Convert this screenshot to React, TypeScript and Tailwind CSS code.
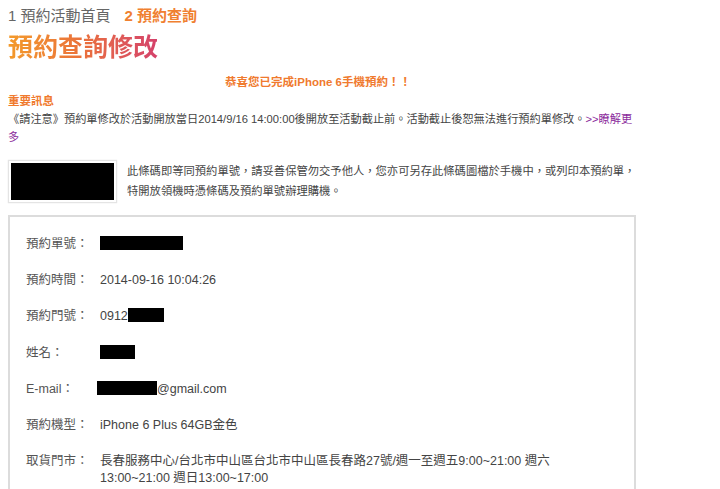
import React from 'react';

const latin = "font-['Liberation_Sans','Noto_Sans_CJK_TC',sans-serif]";

interface Row {
  label: string;
  value: React.ReactNode;
}

const Redact: React.FC<{ w: string }> = ({ w }) => (
  <span className={`inline-block h-[14px] bg-black align-[-2px] ${w}`} />
);

const rows: Row[] = [
  { label: '預約單號：', value: <Redact w="w-[83px]" /> },
  { label: '預約時間：', value: '2014-09-16 10:04:26' },
  {
    label: '預約門號：',
    value: (
      <>
        0912
        <Redact w="w-[36px]" />
      </>
    ),
  },
  { label: '姓名：', value: <Redact w="w-[35px]" /> },
  {
    label: 'E-mail：',
    value: (
      <>
        <span className="-ml-[3px] inline-block h-[14px] w-[60px] bg-black align-[-2px]" />
        @gmail.com
      </>
    ),
  },
  { label: '預約機型：', value: 'iPhone 6 Plus 64GB金色' },
  {
    label: '取貨門市：',
    value: (
      <>
        長春服務中心/台北市中山區台北市中山區長春路27號/週一至週五9:00~21:00 週六
        <br />
        13:00~21:00 週日13:00~17:00
      </>
    ),
  },
];

export default function App() {
  return (
    <div className={`min-h-screen w-[720px] overflow-hidden bg-white ${latin}`}>
      <div className="w-[628px] pl-[8px]">
        {/* breadcrumb */}
        <div className="flex h-[32px] items-center gap-[14px] pt-[1px] text-[15px]">
          <span className="text-[#666]">1 預約活動首頁</span>
          <span className="font-bold text-[#f08030]">2 預約查詢</span>
        </div>

        <h1 className="inline-block bg-gradient-to-r from-[#f39a2a] via-[#ea703a] to-[#d4406a] bg-clip-text text-[25px] font-bold leading-[30px] text-transparent">
          預約查詢修改
        </h1>

        <p className="mt-[10px] text-center text-[11.5px] font-bold leading-[18px] text-[#f07a2e]">
          恭喜您已完成iPhone 6手機預約！！
        </p>

        <p className="mt-[1px] text-[11.5px] font-bold leading-[18px] text-[#f07a2e]">重要訊息</p>
        <p className="whitespace-nowrap text-[11.2px] leading-[18px] text-[#444]">
          《請注意》預約單修改於活動開放當日2014/9/16 14:00:00後開放至活動截止前。活動截止後恕無法進行預約單修改。
          <span className="text-[#8b2c9c]">
            {'>>'}瞭解更
            <br />多
          </span>
        </p>

        {/* barcode */}
        <div className="mt-[14px] flex items-start gap-[10px]">
          <div className="border border-[#e4e4e4] p-[2px] shadow-[0_0_1px_#ddd]">
            <div className="h-[37px] w-[103px] bg-black" />
          </div>
          <p className="whitespace-nowrap pt-[1px] text-[11.3px] leading-[20px] text-[#444]">
            此條碼即等同預約單號，請妥善保管勿交予他人，您亦可另存此條碼圖檔於手機中，或列印本預約單，
            <br />
            特開放領機時憑條碼及預約單號辦理購機。
          </p>
        </div>

        {/* info box */}
        <div className="mt-[12px] w-[628px] border-2 border-[#dcdcdc] pb-[40px] pl-[16px] pt-[17px]">
          <div className="flex flex-col gap-[16.2px]">
            {rows.map(r => (
              <div key={r.label} className="flex text-[12.5px] leading-[20px]">
                <span className="w-[74px] shrink-0 text-[#555]">{r.label}</span>
                <span className="whitespace-nowrap pt-[2px] leading-[16.5px] text-[#444]">{r.value}</span>
              </div>
            ))}
          </div>
        </div>
      </div>
    </div>
  );
}
